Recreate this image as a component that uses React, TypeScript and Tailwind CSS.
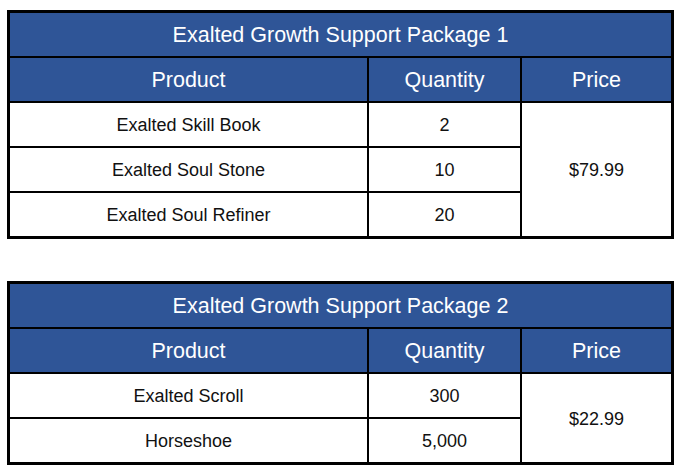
const packages = [
  {
    title: 'Exalted Growth Support Package 1',
    price: '$79.99',
    items: [
      { name: 'Exalted Skill Book', qty: '2' },
      { name: 'Exalted Soul Stone', qty: '10' },
      { name: 'Exalted Soul Refiner', qty: '20' },
    ],
  },
  {
    title: 'Exalted Growth Support Package 2',
    price: '$22.99',
    items: [
      { name: 'Exalted Scroll', qty: '300' },
      { name: 'Horseshoe', qty: '5,000' },
    ],
  },
];

function PackageTable({ pkg }: { pkg: (typeof packages)[number] }) {
  const rows = pkg.items.length;
  return (
    <div
      className="grid grid-cols-[357px_151px_149px] auto-rows-[43px] gap-[2px] bg-black border-[3px] border-black w-[667px]"
    >
      {/* Title */}
      <div className="col-span-3 bg-[#2f5597] text-white text-[21.5px] pt-[2px] flex items-center justify-center">
        {pkg.title}
      </div>

      {/* Header */}
      <div className="bg-[#2f5597] text-white text-[21.5px] pt-[2px] flex items-center justify-center">Product</div>
      <div className="bg-[#2f5597] text-white text-[21.5px] pt-[2px] flex items-center justify-center">Quantity</div>
      <div className="bg-[#2f5597] text-white text-[21.5px] pt-[2px] flex items-center justify-center">Price</div>

      {pkg.items.map((item, i) => (
        <div key={item.name} className="contents">
          <div className="bg-white text-[#111] text-[18px] pt-[2px] flex items-center justify-center">{item.name}</div>
          <div className="bg-white text-[#111] text-[18px] pt-[2px] flex items-center justify-center">{item.qty}</div>
          {i === 0 && (
            <div
              className="bg-white text-[#111] text-[18px] pt-[2px] flex items-center justify-center"
              style={{ gridRow: `span ${rows}` }}
            >
              {pkg.price}
            </div>
          )}
        </div>
      ))}
    </div>
  );
}

export default function App() {
  return (
    <div
      className="w-[680px] h-[472px] bg-white pt-[10px] pl-[7px] flex flex-col gap-[42px]"
      style={{ fontFamily: '"Liberation Sans", Arial, sans-serif' }}
    >
      {packages.map((pkg) => (
        <PackageTable key={pkg.title} pkg={pkg} />
      ))}
    </div>
  );
}
